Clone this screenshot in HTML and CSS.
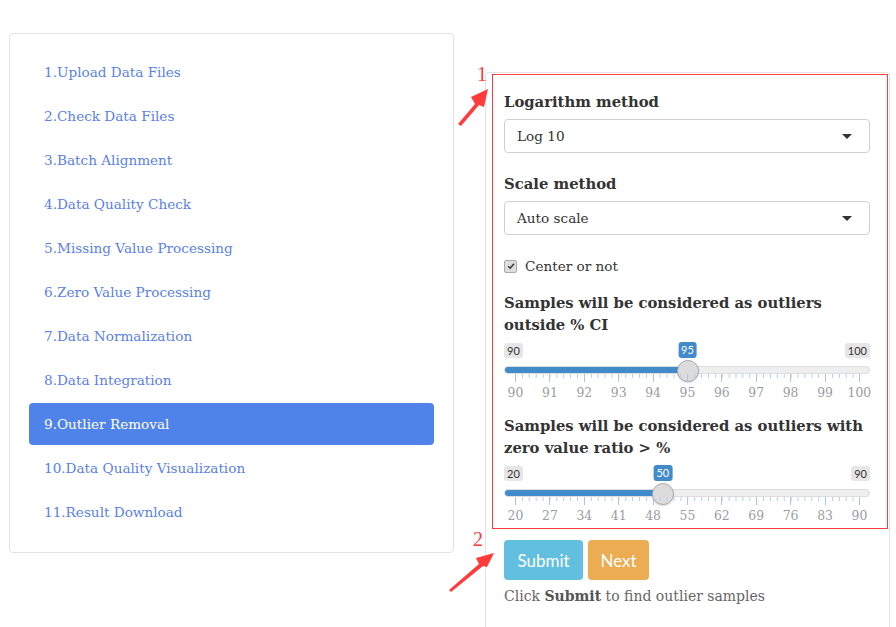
FILE: index.html
```html
<!DOCTYPE html>
<html>
<head>
<meta charset="utf-8">
<link rel="stylesheet" href="styles.css">
</head>
<body>
<div class="page">
  <nav class="sidebar">
    <ul class="pills">
      <li><a>1.Upload Data Files</a></li>
      <li><a>2.Check Data Files</a></li>
      <li><a>3.Batch Alignment</a></li>
      <li><a>4.Data Quality Check</a></li>
      <li><a>5.Missing Value Processing</a></li>
      <li><a>6.Zero Value Processing</a></li>
      <li><a>7.Data Normalization</a></li>
      <li><a>8.Data Integration</a></li>
      <li class="active"><a>9.Outlier Removal</a></li>
      <li><a>10.Data Quality Visualization</a></li>
      <li><a>11.Result Download</a></li>
    </ul>
  </nav>

  <section class="panel">
    <div class="group">
      <label class="ctl-label">Logarithm method</label>
      <div class="select"><span>Log 10</span><span class="caret"></span></div>
    </div>
    <div class="group">
      <label class="ctl-label">Scale method</label>
      <div class="select"><span>Auto scale</span><span class="caret"></span></div>
    </div>
    <div class="check">
      <span class="box"><svg viewBox="0 0 12 12" width="12" height="12"><path d="M2.6 6.2 L5 8.6 L9.6 3.4" fill="none" stroke="#333" stroke-width="1.8"/></svg></span>
      <span>Center or not</span>
    </div>
    <div class="group slider-group">
      <label class="ctl-label">Samples will be considered as outliers outside % CI</label>
      <div class="slider" style="--p:0.5">
        <div class="ends"><span class="tag">90</span><span class="tag">100</span></div>
        <span class="tag val">95</span>
        <div class="track"><div class="fill"></div></div>
        <span class="handle"></span>
        <div class="grid">
          <div class="minor"></div>
          <div class="majors">
            <span class="tick"><i>90</i></span><span class="tick"><i>91</i></span><span class="tick"><i>92</i></span><span class="tick"><i>93</i></span><span class="tick"><i>94</i></span><span class="tick"><i>95</i></span><span class="tick"><i>96</i></span><span class="tick"><i>97</i></span><span class="tick"><i>98</i></span><span class="tick"><i>99</i></span><span class="tick"><i>100</i></span>
          </div>
        </div>
      </div>
    </div>
    <div class="group slider-group second">
      <label class="ctl-label">Samples will be considered as outliers with zero value ratio &gt; %</label>
      <div class="slider" style="--p:0.428571">
        <div class="ends"><span class="tag">20</span><span class="tag">90</span></div>
        <span class="tag val">50</span>
        <div class="track"><div class="fill"></div></div>
        <span class="handle"></span>
        <div class="grid">
          <div class="minor"></div>
          <div class="majors">
            <span class="tick"><i>20</i></span><span class="tick"><i>27</i></span><span class="tick"><i>34</i></span><span class="tick"><i>41</i></span><span class="tick"><i>48</i></span><span class="tick"><i>55</i></span><span class="tick"><i>62</i></span><span class="tick"><i>69</i></span><span class="tick"><i>76</i></span><span class="tick"><i>83</i></span><span class="tick"><i>90</i></span>
          </div>
        </div>
      </div>
    </div>
    <div class="buttons">
      <button class="btn info">Submit</button>
      <button class="btn warn">Next</button>
    </div>
    <p class="hint">Click <b>Submit</b> to find outlier samples</p>
  </section>
</div>

<svg class="annot" width="896" height="627" viewBox="0 0 896 627">
  <rect x="492.5" y="74.5" width="395" height="454" fill="none" stroke="#ff3b3b" stroke-width="1"/>
  <text x="477" y="81" class="num">1</text>
  <polygon points="458,124 475,104 471,97 488,89 484,107 479,105 461,126" fill="#ff3b3b"/>
  <text x="473" y="546" class="num">2</text>
  <polygon points="449,590 479,564 476,558 494,553 487,567 483,566 451,592" fill="#ff3b3b"/>
</svg>
</body>
</html>
```
FILE: styles.css
```css
html, body {
  margin: 0;
  padding: 0;
  background: #fff;
}
body {
  font-family: "DejaVu Serif", Georgia, serif;
  font-size: 13.6px;
  color: #333;
  width: 896px;
  height: 627px;
  overflow: hidden;
  position: relative;
}
.page {
  display: flex;
  align-items: flex-start;
  padding: 33px 0 0 9px;
}
.sidebar {
  width: 445px;
  box-sizing: border-box;
  border: 1px solid #e3e3e3;
  border-radius: 4px;
  padding: 17px 19px 19px 19px;
}
.pills {
  list-style: none;
  margin: 0;
  padding: 0;
  display: flex;
  flex-direction: column;
  gap: 2px;
}
.pills a {
  display: block;
  padding: 10px 15px;
  line-height: 22px;
  color: #5a7fe6;
  border-radius: 4px;
}
.pills .active a {
  background: #4f83e9;
  color: #fff;
}
.panel {
  margin-left: 31px;
  margin-top: 39px;
  width: 405px;
  box-sizing: border-box;
  border: 1px solid #e3e3e3;
  border-bottom: none;
  border-radius: 4px 4px 0 0;
  padding: 18px 19px 20px 18px;
  min-height: 560px;
}
.ctl-label {
  display: block;
  font-weight: bold;
  font-size: 14.8px;
  line-height: 22px;
  margin-bottom: 6px;
}
.group {
  margin-bottom: 20px;
}
.select {
  height: 34px;
  box-sizing: border-box;
  border: 1px solid #cfcfcf;
  border-radius: 4px;
  display: flex;
  align-items: center;
  justify-content: space-between;
  padding: 0 17px 0 12px;
  font-size: 13.6px;
}
.caret {
  width: 0;
  height: 0;
  border-left: 5px solid transparent;
  border-right: 5px solid transparent;
  border-top: 5px solid #333;
}
.check {
  display: flex;
  align-items: center;
  gap: 8px;
  line-height: 22px;
  margin-bottom: 15px;
}
.box {
  width: 11px;
  height: 11px;
  border: 1px solid #aaa;
  border-radius: 2px;
  background: #ddd;
  display: flex;
  align-items: center;
  justify-content: center;
}
.box svg { width: 10px; height: 10px; }
.slider-group .ctl-label { margin-bottom: 7px; }
.slider-group { margin-bottom: 16px; }
.slider-group.second { margin-bottom: 18px; }
.slider {
  position: relative;
}
.ends {
  display: flex;
  justify-content: space-between;
}
.tag {
  font-family: Lato, "Open Sans", sans-serif;
  font-size: 11px;
  line-height: 15px;
  padding: 0 3px;
  background: #e6e6e6;
  border-radius: 3px;
  color: #333;
}
.val {
  position: absolute;
  top: -1px;
  left: calc(11px + (100% - 21px) * var(--p));
  transform: translateX(-50%);
  background: #428bca;
  color: #fff;
  line-height: 16px;
}
.track {
  margin-top: 8px;
  height: 8px;
  border-radius: 4px;
  background: #eee;
  border: 1px solid #ddd;
  box-sizing: border-box;
  overflow: hidden;
}
.fill {
  height: 100%;
  width: calc(11px + (100% - 21px) * var(--p));
  background: #428bca;
}
.handle {
  position: absolute;
  top: 17px;
  left: calc(11px + (100% - 21px) * var(--p) - 11px);
  width: 20px;
  height: 20px;
  border-radius: 50%;
  background: #dcdcdc;
  border: 1px solid #ababab;
  box-shadow: 0 1px 2px rgba(0,0,0,0.15);
}
.grid {
  padding: 0 10px 0 11px;
  position: relative;
  height: 25px;
}
.minor {
  height: 4px;
  background-image: linear-gradient(to right, #b7cde6 1px, transparent 1px);
  background-size: 2% 4px;
  background-repeat: repeat-x;
}
.majors {
  display: flex;
  justify-content: space-between;
  margin-top: -4px;
}
.tick {
  width: 1px;
  height: 8px;
  background: #a9c4e4;
  position: relative;
}
.tick i {
  position: absolute;
  top: 12px;
  left: 50%;
  transform: translateX(-50%);
  font-style: normal;
  font-size: 12.4px;
  line-height: 14px;
  color: #9c9ca4;
}
.buttons {
  display: flex;
  gap: 5px;
}
.btn {
  height: 40px;
  border: none;
  border-radius: 4px;
  color: #fff;
  font-family: Lato, "Open Sans", sans-serif;
  font-size: 17px;
  padding: 0 12px;
}
.btn.info { background: #63bfdf; width: 79px; }
.btn.warn { background: #ecac52; width: 61px; }
.hint {
  margin: 5px 0 0 0;
  font-size: 14px;
  line-height: 22px;
  color: #666;
}
.hint b { color: #555; }
.annot {
  position: absolute;
  top: 0;
  left: 0;
  pointer-events: none;
}
.annot .num {
  font-family: "Liberation Serif", serif;
  font-size: 20px;
  fill: #ff3b3b;
}
```
